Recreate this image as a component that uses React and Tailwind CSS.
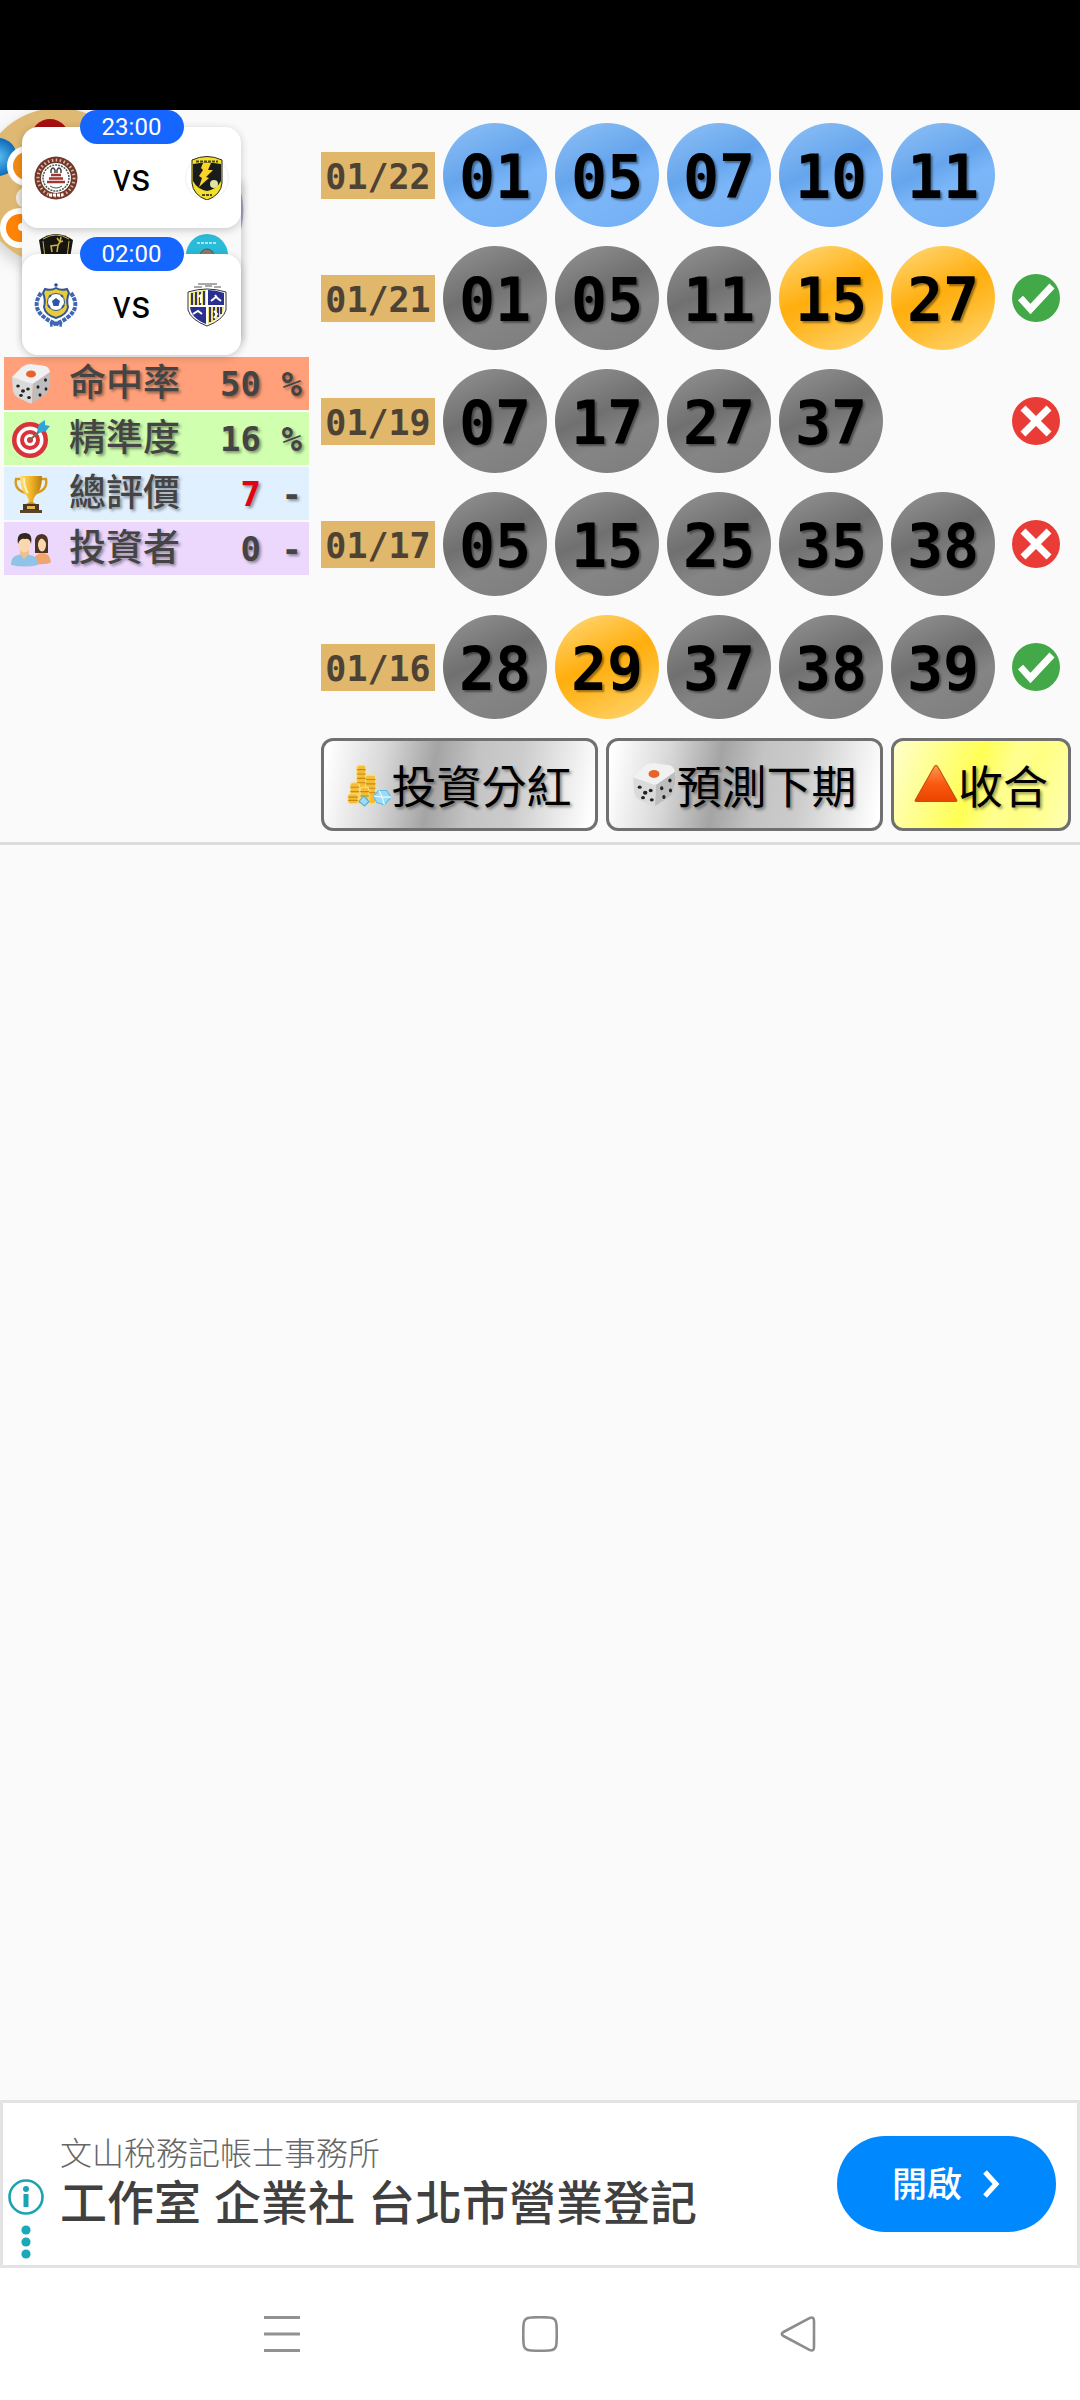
import React, { useState } from "react";

const draws = [
    { date: "01/22", numbers: ["01", "05", "07", "10", "11"], hits: [], next: true, result: null },
    { date: "01/21", numbers: ["01", "05", "11", "15", "27"], hits: ["15", "27"], result: "win" },
    { date: "01/19", numbers: ["07", "17", "27", "37"], hits: [], result: "lose" },
    { date: "01/17", numbers: ["05", "15", "25", "35", "38"], hits: [], result: "lose" },
    { date: "01/16", numbers: ["28", "29", "37", "38", "39"], hits: ["29"], result: "win" },
];

const DiceIcon = ({ className }) => (
    <svg viewBox="0 0 40 40" className={className} aria-hidden="true">
        <path d="M1 13 L22 19 L21 39 Q20 40 18 39 L6 33 Q3 31 2 27 Z" fill="#dadada" />
        <path d="M22 19 L39 8 Q40 18 37 27 Q36 30 32 32 L21 39 Z" fill="#bdbdbd" />
        <path d="M1 13 L11 3 Q15 0 20 0 L34 2 Q38 3 39 8 L23 19 Q21 20 18 19 Z" fill="#f1f1f1" />
        <ellipse cx="20" cy="10" rx="5" ry="3.6" fill="#e8622c" />
        <g fill="#222">
            <ellipse cx="7" cy="22" rx="1.800" ry="1.500" />
            <ellipse cx="17" cy="25" rx="1.800" ry="1.500" />
            <ellipse cx="12" cy="27" rx="2" ry="1.800" />
            <ellipse cx="10" cy="31.500" rx="1.800" ry="1.400" />
            <ellipse cx="18" cy="33.500" rx="1.800" ry="1.500" />
            <ellipse cx="34.500" cy="16" rx="1.500" ry="1.800" />
            <ellipse cx="27" cy="23" rx="1.500" ry="1.800" />
            <ellipse cx="35" cy="25" rx="1.400" ry="1.800" />
            <ellipse cx="29" cy="31" rx="1.500" ry="1.800" />
        </g>
    </svg>
);

const TargetIcon = ({ className }) => (
    <svg viewBox="0 0 40 40" className={className} aria-hidden="true">
        <circle cx="19" cy="21" r="18" fill="#d8333a" />
        <circle cx="19" cy="21" r="13.500" fill="#fff" />
        <circle cx="19" cy="21" r="10" fill="#d8333a" />
        <circle cx="19" cy="21" r="6" fill="#fff" />
        <circle cx="19" cy="21" r="3" fill="#d8333a" />
        <path d="M19 21 L31 10" stroke="#7b6a58" strokeWidth="2" />
        <path d="M26 13 L28 5 L34 1 L34 6 L39 7 L35 12 L28 14 Z" fill="#2fa5d6" />
    </svg>
);

const TrophyIcon = ({ className }) => (
    <svg viewBox="0 0 40 40" className={className} aria-hidden="true">
        <defs>
            <linearGradient id="gold">
                <stop offset="0" stopColor="#ffe27a" />
                <stop offset="0.5" stopColor="#f0b429" />
                <stop offset="1" stopColor="#b97d0c" />
            </linearGradient>
        </defs>
        <path d="M11 5 H5 Q3 16 15 19 M29 5 H35 Q37 16 25 19" fill="none" stroke="#d99a1b" strokeWidth="2.400" />
        <path d="M9 2 H31 Q31 16 25 21 Q22 24 22 30 H18 Q18 24 15 21 Q9 16 9 2 Z" fill="url(#gold)" />
        <path d="M13 4 Q13 14 17 19" fill="none" stroke="#fff3b8" strokeWidth="2" />
        <path d="M15 30 Q20 26 25 30 Z" fill="#d1901a" />
        <rect x="12" y="30" width="16" height="7" fill="#4c3820" />
        <rect x="16" y="32" width="8" height="3" fill="#e5b649" />
        <rect x="9" y="36" width="22" height="3" fill="#5b4326" />
    </svg>
);

const InvestorsIcon = ({ className }) => (
    <svg viewBox="0 0 40 40" className={className} aria-hidden="true">
        <path d="M24 23 V11 Q25 5 31 5 Q37 6 37 12 V24 H24 Z" fill="#4f3323" />
        <path d="M22 35 Q23 24 31 24 Q39 24 40 33 Q37 36 22 35 Z" fill="#f0a56f" />
        <ellipse cx="31" cy="16" rx="4" ry="6.500" fill="#fbd7ae" />
        <path d="M26 13 Q28 7 31 9 L36 14 Q37 6 31 6 Q25 7 26 13 Z" fill="#4f3323" />
        <path d="M0 36 Q0 27 7 26 L13 24 L19 26 Q27 27 27 36 Q14 39 0 36 Z" fill="#8fc4e8" />
        <path d="M9 25 L13 30 L18 25 V21 H9 Z" fill="#f0c091" />
        <ellipse cx="13.500" cy="15" rx="6" ry="8.500" fill="#fbd7ae" />
        <path d="M7 15 Q5 4 14 4 Q22 4 20 15 Q19 9 14 10 Q9 9 7 15 Z" fill="#33271f" />
    </svg>
);

const CoinsIcon = ({ className }) => (
    <svg viewBox="0 0 40 40" className={className} aria-hidden="true">
        <g fill="#f4bd35" stroke="#fbe08a" strokeWidth="1">
            <rect x="9" y="2" width="8" height="35" rx="2" />
            <rect x="17" y="11" width="9" height="26" rx="2" />
            <rect x="3" y="18" width="8" height="16" rx="2" />
            <rect x="1" y="28" width="9" height="9" rx="2" />
            <rect x="12" y="22" width="8" height="16" rx="2" />
        </g>
        <path d="M9 6h8M9 10h8M9 14h8M9 18h8M17 15h9M17 19h9M20 23h6M20 27h6M3 22h8M3 26h8M1 31h9M1 34h9M12 26h8M12 30h8" stroke="#c98a12" strokeWidth="1" />
        <path d="M11 35 L15 30 L20 35 L16 39 Z" fill="#9ddcf7" stroke="#4fb0dc" />
        <path d="M24 30 L29 25 H36 L40 31 L34 38 L27 36 Z" fill="#9ddcf7" stroke="#5fbce6" />
        <path d="M29 25 L32 31 L40 31 M32 31 L34 38 M24 30 L32 31" fill="none" stroke="#e9faff" />
    </svg>
);

const TriangleIcon = ({ className }) => (
    <svg viewBox="0 0 40 40" className={className} aria-hidden="true">
        <defs>
            <linearGradient id="flame" x1="0" y1="0" x2="0" y2="1">
                <stop offset="0" stopColor="#ff9a52" />
                <stop offset="0.5" stopColor="#fb5a12" />
                <stop offset="1" stopColor="#e94400" />
            </linearGradient>
        </defs>
        <path d="M20 2 Q21 2 22 4 L39 34 Q39 35 38 35 H2 Q1 35 1 34 L18 4 Q19 2 20 2 Z" fill="url(#flame)" stroke="#c6500f" strokeWidth="1" />
    </svg>
);

const WinIcon = () => (
    <svg viewBox="0 0 48 48" className="size-12" role="img" aria-label="win">
        <circle cx="24" cy="24" r="24" fill="#43a847" />
        <path d="M8.500 24 L18.500 35 L40 12" fill="none" stroke="#fff" strokeWidth="7" />
    </svg>
);

const LoseIcon = () => (
    <svg viewBox="0 0 48 48" className="size-12" role="img" aria-label="lose">
        <circle cx="24" cy="24" r="24" fill="#e93c36" />
        <path d="M11 11 L37 37 M37 11 L11 37" fill="none" stroke="#fff" strokeWidth="7" />
    </svg>
);

// Team crests
const BrownCrest = () => (
    <svg viewBox="0 0 44 44" className="size-11" aria-hidden="true">
        <circle cx="22" cy="22" r="21.500" fill="#74382a" />
        <circle cx="22" cy="22" r="18" fill="none" stroke="#d8b9ab" strokeWidth="3" strokeDasharray="1.500 2.500" />
        <circle cx="22" cy="22" r="15" fill="#fff" />
        <circle cx="22" cy="22" r="13" fill="none" stroke="#4a5a4d" strokeWidth="1.500" strokeDasharray="2 1" />
        <path d="M17 17 V14 Q19 10 21 14 V17 M23 17 V14 Q25 10 27 14 V17" fill="none" stroke="#444" strokeWidth="1.500" />
        <path d="M17 19 H27 M15 22.500 H29 M13 26 H31" stroke="#a3352f" strokeWidth="2.300" />
        <path d="M16 30 Q22 34 28 30" stroke="#555" fill="none" />
        <path d="M15 39 H29" stroke="#fff" strokeWidth="3" strokeDasharray="3 1" />
    </svg>
);

const BoltCrest = () => (
    <svg viewBox="0 0 44 44" className="size-11" aria-hidden="true">
        <circle cx="22" cy="22" r="21.500" fill="#fff" stroke="#f0f0f0" />
        <path d="M7 4 Q22 -3 37 4 V27 Q36 39 22 44 Q8 39 7 27 Z" fill="#f2e02c" stroke="#2b2810" strokeWidth="1" />
        <path d="M8 8 Q22 5 36 8 V25 Q32 33 22 35 Q12 33 8 25 Z" fill="#191b1c" />
        <path d="M11 5.500 H33" stroke="#514910" strokeWidth="2" strokeDasharray="3 1" />
        <path d="M18 7 H26 L23 14 L28 14 L21 21 L24 22 L14 31 L17 22 L14 20 L18 14 L16 12 Z" fill="#fbd42a" />
        <circle cx="29" cy="28" r="4" fill="#dfe2a0" />
        <path d="M17 39 H27" stroke="#514910" strokeWidth="2" strokeDasharray="3 1" />
    </svg>
);

const BlueCrest = () => (
    <svg viewBox="0 0 44 44" className="size-11" aria-hidden="true">
        <path d="M7 10 Q-3 24 10 34 Q17 40 28 42 M37 10 Q47 24 34 34 Q27 40 16 42" fill="none" stroke="#3f66b2" strokeWidth="4" strokeDasharray="4 1" />
        <circle cx="22" cy="2" r="1.800" fill="#2b4d99" />
        <path d="M11 6 Q17 8 22 5 Q27 8 33 6 L35 10 Q32 17 34 24 Q33 32 22 35 Q11 32 10 24 Q12 17 9 10 Z" fill="#e8cc38" stroke="#345694" strokeWidth="2" />
        <circle cx="22" cy="19" r="8.500" fill="#fff" stroke="#345694" strokeWidth="1" />
        <path d="M22 15 L26 18 L24.500 23 H19.500 L18 18 Z" fill="#2e57a5" />
        <path d="M15 14 L17 12 M29 14 L27 12 M14 22 L16 25 M30 22 L28 25" stroke="#2e57a5" strokeWidth="2" />
    </svg>
);

const ShieldCrest = () => (
    <svg viewBox="0 0 44 44" className="size-11" aria-hidden="true">
        <path d="M9 4 H17 M20 3 H27 M29 4 H36 M13 1 H32" stroke="#555" strokeWidth="1" />
        <path d="M3 9 Q22 3 41 9 V27 Q38 37 22 43 Q6 37 3 27 Z" fill="#fff" stroke="#333" strokeWidth="1" />
        <path d="M5 10 Q13 7 21 7 V22 H5 Z" fill="#eee06a" />
        <path d="M23 7 Q31 7 39 10 V22 H23 Z" fill="#29318f" />
        <path d="M5 24 H21 V41 Q6 35 5 24 Z" fill="#29318f" />
        <path d="M23 24 H39 Q38 35 23 41 Z" fill="#eee06a" />
        <path d="M7 10 V22 M11 9 V22 M15 9 V22 M19 8 V22 M25 24 V39 M29 24 V37 M33 24 V34 M36 24 V31" stroke="#34366a" strokeWidth="2" />
        <path d="M13 14 L16 12 V20 M29 28 L32 31 L29 35 M26 18 L31 14 L36 18 M30 12 L33 16 M8 31 L13 28 L17 31" fill="none" stroke="#fff" strokeWidth="2" />
    </svg>
);

const DeerCrest = () => (
    <svg viewBox="0 0 44 44" className="size-11" aria-hidden="true">
        <path d="M5 7 Q22 -5 39 7 L36 25 Q33 38 22 43 Q11 38 8 25 Z" fill="#16150f" />
        <path d="M9 8 L11 25 M35 8 L33 25 M9 6 Q22 -2 35 6" fill="none" stroke="#c9b24b" strokeWidth="1" />
        <path d="M18 19 L17 13 L24 12 L26 9 L29 8 M24 12 L23 19 M26 9 L23 5 M26 9 L27 4" fill="none" stroke="#c9b24b" strokeWidth="1.600" />
    </svg>
);

const CyanCrest = () => (
    <svg viewBox="0 0 44 44" className="size-11" aria-hidden="true">
        <circle cx="22" cy="22" r="21" fill="#2bbbd8" />
        <path d="M12 10 H32" stroke="#a5e6f2" strokeWidth="2" strokeDasharray="3 1" />
        <circle cx="22" cy="23" r="7" fill="#8d7a69" stroke="#555" />
    </svg>
);

// Wooden disc with lottery balls, partly hidden by the match cards
const LotteryDisc = () => (
    <svg viewBox="0 0 250 190" className="absolute left-0 top-0 w-[250px] h-[190px]" aria-hidden="true">
        <defs>
            <radialGradient id="blueBall">
                <stop offset="0" stopColor="#5cc0f5" />
                <stop offset="1" stopColor="#0c69b8" />
            </radialGradient>
            <filter id="soft" x="-20%" y="-20%" width="140%" height="140%">
                <feGaussianBlur stdDeviation="7" />
            </filter>
        </defs>
        <circle cx="60" cy="84" r="82" fill="#bbb" opacity="0.6" filter="url(#soft)" />
        <circle cx="58" cy="77" r="79" fill="#dfb973" />
        <circle cx="50" cy="28" r="19" fill="#a80f10" />
        <circle cx="-2" cy="47" r="19" fill="url(#blueBall)" />
        <circle cx="27" cy="56" r="20" fill="#fff" />
        <circle cx="27" cy="56" r="14" fill="#f28b14" />
        <circle cx="27" cy="88" r="11" fill="#f1ece4" />
        <circle cx="20" cy="118" r="20" fill="#fff" />
        <circle cx="20" cy="118" r="14" fill="#ff8405" />
        <circle cx="22" cy="117" r="4" fill="#fff" />
        <path d="M238 74 Q247 95 241 120 Z" fill="#b6b2dc" />
    </svg>
);

const MatchCard = ({ time, home, away }) => (
    <div className="relative flex items-center justify-between h-[101px] px-3 bg-white rounded-2xl shadow-[0_2px_8px_rgba(0,0,0,0.2)]">
        <span className="absolute inset-x-0 -top-[17px] mx-auto w-[104px] h-[34px] rounded-full bg-[#1565ff] text-white text-2xl leading-[34px] text-center">
            {time}
        </span>
        {home}
        <span className="text-[38px] leading-none font-normal text-black">vs</span>
        {away}
    </div>
);

const MatchOverlay = () => (
    <div className="absolute left-0 top-0 w-[241px] font-[Roboto,sans-serif]">
        <LotteryDisc />
        <div className="absolute left-[22px] right-0 top-[70px] h-[160px] px-3 pt-[53px] flex justify-between bg-[#f9f9f9] shadow-[2px_2px_8px_rgba(0,0,0,0.2)]">
            <DeerCrest />
            <CyanCrest />
        </div>
        <div className="relative pl-[22px] pt-[17px] flex flex-col gap-[26px]">
            <MatchCard time="23:00" home={<BrownCrest />} away={<BoltCrest />} />
            <MatchCard time="02:00" home={<BlueCrest />} away={<ShieldCrest />} />
        </div>
    </div>
);

const StatRow = ({ icon, label, value, unit, color, valueColor }) => (
    <div className={`flex items-center h-[53px] px-[7px] text-[#444] [text-shadow:2px_2px_3px_rgba(0,0,0,0.4)] ${color}`}>
        {icon}
        <span className="ml-[18px] text-[37px] leading-none font-medium font-['Liberation_Sans','Noto_Sans_CJK_TC',sans-serif]">{label}</span>
        <span className="flex-1 text-right whitespace-pre text-[34px] leading-none font-bold font-['DejaVu_Sans_Mono',monospace]">
            <span className={valueColor}>{value}</span>{" " + unit}
        </span>
    </div>
);

const Ball = ({ number, color }) => (
    <span className={`flex items-center justify-center size-[104px] pt-1 rounded-full text-black text-[60px] leading-none font-bold font-['DejaVu_Sans_Mono',monospace] [text-shadow:2px_2px_2px_rgba(0,0,0,0.4)] ${color}`}>
        {number}
    </span>
);

const DrawRow = ({ draw }) => {
    const ballColor = (number) => {
        if (draw.next) return "bg-[linear-gradient(155deg,#85bbf5_10%,#66a5ec_42%,#7bb6f8_60%,#72aff3_100%)]";
        if (draw.hits.includes(number)) return "bg-[linear-gradient(155deg,#ffd166_10%,#ffae0d_45%,#ffb824_60%,#ffd46e_95%)]";
        return "bg-[linear-gradient(155deg,#8c8c8c_10%,#707070_42%,#858585_65%,#7c7c7c_100%)]";
    };
    return (
        <div className="flex items-center h-[104px]">
            <span className="w-[114px] h-[47px] mr-2 bg-[#e0b76b] text-[#4d4234] text-center text-[35px] leading-[50px] font-bold font-['DejaVu_Sans_Mono',monospace]">
                {draw.date}
            </span>
            <div className="flex gap-2">
                {draw.numbers.map((number) => (
                    <Ball key={number} number={number} color={ballColor(number)} />
                ))}
            </div>
            <div className="ml-auto mr-[11px]">
                {draw.result === "win" && <WinIcon />}
                {draw.result === "lose" && <LoseIcon />}
            </div>
        </div>
    );
};

const buttonBase = "flex items-center justify-center h-[93px] border-[3px] border-[#707070] rounded-xl text-black text-[45px] leading-none [text-shadow:2px_2px_3px_rgba(0,0,0,0.4)]";
const silver = "bg-[linear-gradient(100deg,#fff_2%,#d8d8d8_22%,#a4a4a4_40%,#c4c4c4_55%,#cccccc_70%,#fff_98%)]";
const yellow = "bg-[linear-gradient(110deg,#ffffc8_2%,#ffff55_45%,#ffff90_62%,#ffff84_75%,#ffffb0_98%)]";

const AdBanner = () => (
    <aside className="flex items-center h-[168px] pl-[5px] pr-[21px] bg-white border-[3px] border-[#e3e3e5] font-['Liberation_Sans','Noto_Sans_CJK_TC',sans-serif]">
        <div className="flex flex-col items-center self-end w-9 mb-1">
            <button aria-label="Ad info">
                <svg viewBox="0 0 36 36" className="block size-9">
                    <circle cx="18" cy="18" r="16.500" fill="none" stroke="#1ba3b3" strokeWidth="2.600" />
                    <circle cx="18" cy="10" r="3" fill="#1ba3b3" />
                    <rect x="15.500" y="15" width="5" height="13" fill="#1ba3b3" />
                </svg>
            </button>
            <button aria-label="Ad options" className="mt-2.5">
                <svg viewBox="0 0 12 36" className="block w-3 h-9">
                    <circle cx="6" cy="5" r="4.600" fill="#1aa9b9" />
                    <circle cx="6" cy="17" r="4.600" fill="#1aa9b9" />
                    <circle cx="6" cy="29" r="4.600" fill="#1aa9b9" />
                </svg>
            </button>
        </div>
        <div className="flex-1 ml-4 pb-2">
            <div className="text-[32px] leading-[48px] font-light text-[#666]">文山稅務記帳士事務所</div>
            <div className="text-[47px] leading-[52px] font-medium text-[#404040]">工作室 企業社 台北市營業登記</div>
        </div>
        <button className="flex items-center justify-center gap-[19px] w-[219px] h-24 rounded-full bg-[#0088ff] text-white text-[35px] leading-none font-medium">
            開啟
            <svg viewBox="0 0 20 28" className="w-5 h-7" aria-hidden="true">
                <path d="M4 2 L15 14 L4 26" fill="none" stroke="#fff" strokeWidth="5" />
            </svg>
        </button>
    </aside>
);

const NavBar = () => (
    <nav className="grid grid-cols-[1fr_auto_1fr] items-center gap-[222px] h-[132px] bg-white">
        <button aria-label="Recents" className="justify-self-end">
            <svg viewBox="0 0 36 36" className="block size-9" stroke="#929292" strokeWidth="3">
                <path d="M0 1.500 H36 M0 18 H36 M0 34.500 H36" />
            </svg>
        </button>
        <button aria-label="Home">
            <svg viewBox="0 0 36 36" className="block size-9" fill="none" stroke="#8c8c8c" strokeWidth="2.600">
                <path d="M9 1.500 Q18 1 27 1.500 Q34.500 1.500 34.500 9 Q35 18 34.500 27 Q34.500 34.500 27 34.500 Q18 35 9 34.500 Q1.500 34.500 1.500 27 Q1 18 1.500 9 Q1.500 1.500 9 1.500 Z" />
            </svg>
        </button>
        <button aria-label="Back" className="justify-self-start">
            <svg viewBox="0 0 36 36" className="block size-9" fill="none" stroke="#8c8c8c" strokeWidth="2.600">
                <path d="M29.500 2.200 Q34 0 34 5 V31 Q34 36 29.500 33.800 L3.500 20 Q0 18 3.500 16 Z" />
            </svg>
        </button>
    </nav>
);

export default function App() {
    const [open] = useState(true);

    return (
        <div className="flex flex-col min-h-screen bg-[#fafafa]">
            {/* Status bar */}
            <div className="h-[110px] bg-black"></div>

            <main className="relative flex-1">
                <section className="flex pl-1 pr-[9px] pt-[13px] pb-[11px] border-b-3 border-[#dcdcdc]">
                    {/* Rating panel */}
                    <div className="flex flex-col gap-0.5 w-[305px] mr-3 pt-[234px] shrink-0">
                        <StatRow icon={<DiceIcon className="size-10" />} label="命中率" value="50" unit="%" color="bg-[#ffa07a]" />
                        <StatRow icon={<TargetIcon className="size-10" />} label="精準度" value="16" unit="%" color="bg-[#d0ffb0]" />
                        <StatRow icon={<TrophyIcon className="size-10" />} label="總評價" value="7" unit="-" color="bg-[#e0f0ff]" valueColor="text-[#dd0511]" />
                        <StatRow icon={<InvestorsIcon className="size-10" />} label="投資者" value="0" unit="-" color="bg-[#ecd7fd]" />
                    </div>

                    {/* Draw history */}
                    <div className="flex flex-col flex-1 gap-[19px]">
                        {open && draws.map((draw) => <DrawRow key={draw.date} draw={draw} />)}
                        <div className="flex gap-2 font-['Noto_Sans_CJK_TC',sans-serif]">
                            <button className={`${buttonBase} ${silver} w-[277px]`}>
                                <CoinsIcon className="size-11" />投資分紅
                            </button>
                            <button className={`${buttonBase} ${silver} w-[277px]`}>
                                <DiceIcon className="size-11" />預測下期
                            </button>
                            <button className={`${buttonBase} ${yellow} flex-1`}>
                                <TriangleIcon className="size-11" />收合
                            </button>
                        </div>
                    </div>
                </section>
                <MatchOverlay />
            </main>

            <AdBanner />
            <NavBar />
        </div>
    );
}
